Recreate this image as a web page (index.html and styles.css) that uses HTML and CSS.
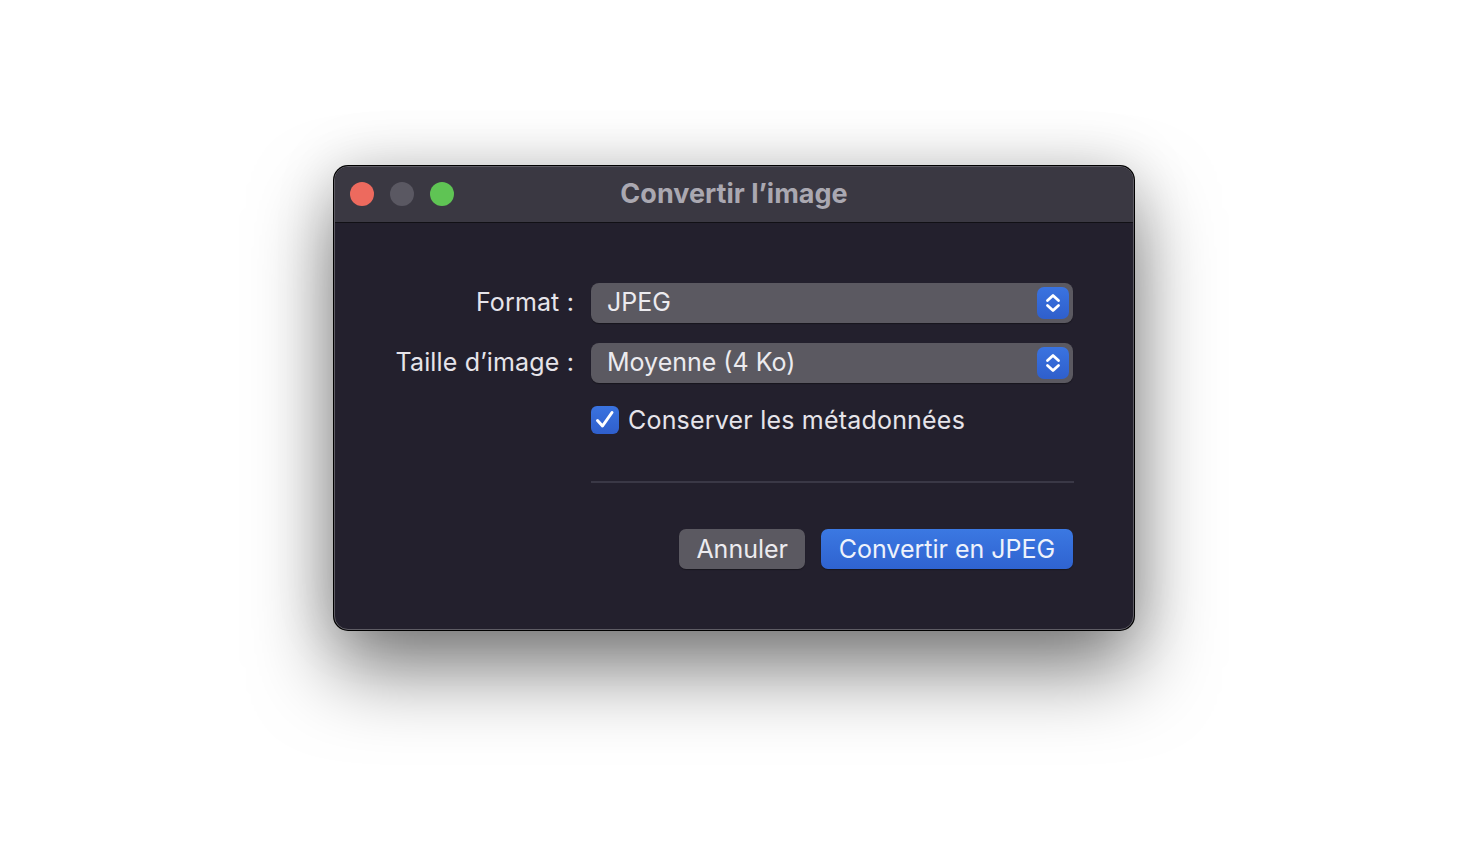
FILE: index.html
```html
<!DOCTYPE html>
<html lang="fr">
<head>
    <meta charset="UTF-8">
    <meta name="viewport" content="width=device-width, initial-scale=1.0">
    <title>Convertir l’image</title>
    <link rel="stylesheet" href="styles.css">
</head>
<body>
    <div class="window">
        <!-- Barre de titre -->
        <div class="titlebar">
            <div class="lights">
                <span class="light red"></span>
                <span class="light gray"></span>
                <span class="light green"></span>
            </div>
            <div class="title">Convertir l’image</div>
        </div>

        <!-- Contenu -->
        <div class="content">
            <div class="form">
                <div class="label">Format :</div>
                <div class="popup">
                    <span>JPEG</span>
                    <span class="stepper">
                        <svg width="18" height="24" viewBox="0 0 18 24"><path d="M3.5 9.5 L9 4.5 L14.5 9.5 M3.5 14.5 L9 19.5 L14.5 14.5" fill="none" stroke="#fff" stroke-width="2.8" stroke-linecap="round" stroke-linejoin="round"/></svg>
                    </span>
                </div>

                <div class="label">Taille d’image :</div>
                <div class="popup">
                    <span>Moyenne (4 Ko)</span>
                    <span class="stepper">
                        <svg width="18" height="24" viewBox="0 0 18 24"><path d="M3.5 9.5 L9 4.5 L14.5 9.5 M3.5 14.5 L9 19.5 L14.5 14.5" fill="none" stroke="#fff" stroke-width="2.8" stroke-linecap="round" stroke-linejoin="round"/></svg>
                    </span>
                </div>

                <div></div>
                <label class="check">
                    <span class="box">
                        <svg width="22" height="22" viewBox="0 0 22 22"><path d="M3.5 11.5 L8.5 17 L18 3.5" fill="none" stroke="#fff" stroke-width="3" stroke-linecap="round" stroke-linejoin="round"/></svg>
                    </span>
                    Conserver les métadonnées
                </label>

                <div></div>
                <div class="separator"></div>

                <div></div>
                <div class="buttons">
                    <button class="btn">Annuler</button>
                    <button class="btn primary">Convertir en JPEG</button>
                </div>
            </div>
        </div>
    </div>
</body>
</html>
```

FILE: styles.css
```css
html, body {
    height: 100%;
}
body {
    margin: 0;
    padding: 0;
    background-color: #ffffff;
    font-family: Inter, "Noto Sans", sans-serif;
    overflow: hidden;
}
.window {
    width: 800px;
    height: 464px;
    box-sizing: border-box;
    margin: 166px auto 0;
    background-color: #23202d;
    border: 1px solid #5e5c64;
    border-radius: 14px;
    overflow: hidden;
    box-shadow: 0 0 0 1px #000, 0 40px 80px rgba(0, 0, 0, 0.5), 0 0 60px rgba(0, 0, 0, 0.15);
}
.titlebar {
    position: relative;
    height: 55px;
    background-color: #3a3842;
    border-bottom: 1px solid #111015;
    display: flex;
    align-items: center;
    justify-content: center;
}
.lights {
    position: absolute;
    left: 15px;
    top: 15px;
    display: flex;
    gap: 16px;
}
.light {
    width: 24px;
    height: 24px;
    border-radius: 50%;
}
.light.red { background-color: #ed6a5e; }
.light.gray { background-color: #5a5862; }
.light.green { background-color: #5fc454; }
.title {
    font-size: 27px;
    font-weight: 700;
    color: #aaa8b1;
    margin-top: -3px;
}
.content {
    padding: 60px 60px 0 0;
}
.form {
    display: grid;
    grid-template-columns: 1fr 482px;
    column-gap: 17px;
    align-items: center;
}
.label {
    text-align: right;
    font-size: 25px;
    color: #e6e4ea;
    letter-spacing: 0.15px;
    margin-top: -2px;
}
.popup {
    height: 40px;
    box-sizing: border-box;
    background-color: #5b5961;
    border-radius: 8px;
    display: flex;
    align-items: center;
    justify-content: space-between;
    padding: 0 4px 0 16px;
    font-size: 25px;
    color: #ecebef;
    box-shadow: 0 1px 1px rgba(0, 0, 0, 0.35);
}
.popup span:first-child {
    margin-top: -2px;
}
.popup + .label {
    margin-top: 18px;
}
.popup + .label + .popup {
    margin-top: 20px;
}
.stepper {
    width: 32px;
    height: 32px;
    border-radius: 7px;
    background: linear-gradient(#3a73e0, #2f5fcc);
    display: flex;
    align-items: center;
    justify-content: center;
}
.check {
    margin-top: 23px;
    display: flex;
    align-items: center;
    gap: 9px;
    font-size: 25px;
    color: #e6e4ea;
    height: 28px;
    letter-spacing: 0.2px;
}
.box {
    width: 28px;
    height: 28px;
    border-radius: 6px;
    background: linear-gradient(#3a73e0, #2f5fcc);
    display: flex;
    align-items: center;
    justify-content: center;
}
.separator {
    margin-top: 47px;
    height: 2px;
    background-color: #3a3846;
    width: 483px;
}
.buttons {
    margin-top: 46px;
    display: flex;
    justify-content: flex-end;
    gap: 16px;
}
.btn {
    height: 40px;
    border: none;
    border-radius: 7px;
    font-family: Inter, "Noto Sans", sans-serif;
    font-size: 25px;
    color: #ecebef;
    background-color: #5b5961;
    padding: 0 17px;
    box-shadow: 0 1px 1px rgba(0, 0, 0, 0.35);
}
.btn.primary {
    background: linear-gradient(#3b78e2, #2f63d0);
    color: #eef2fb;
    padding: 0 16px;
    width: 252px;
}
```
